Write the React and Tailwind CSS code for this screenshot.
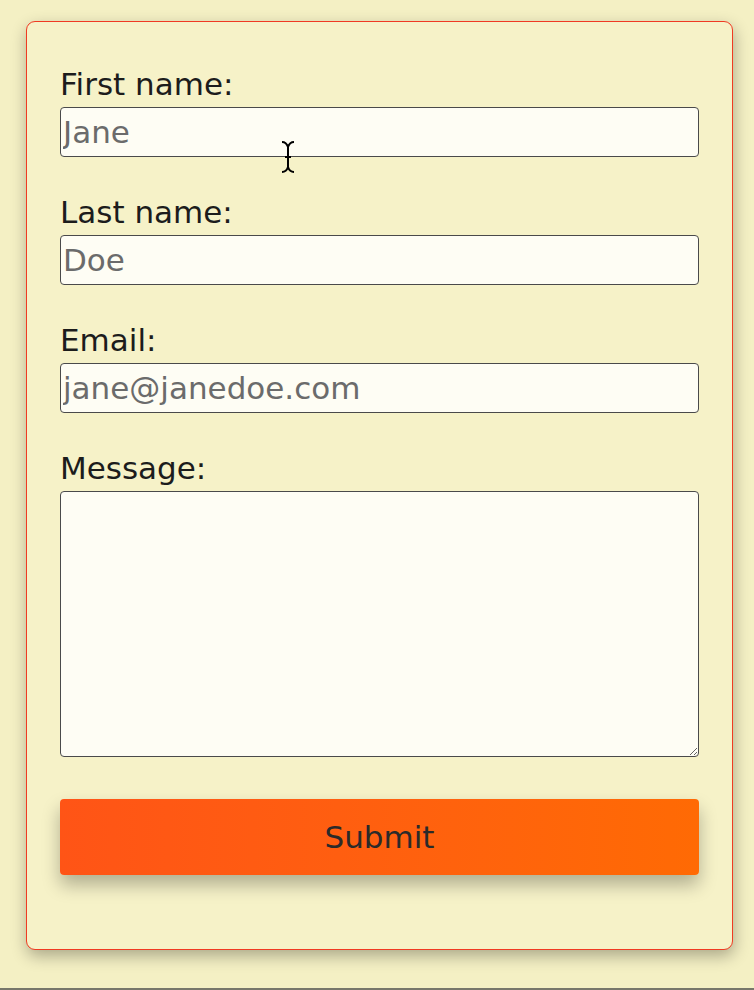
import React from "react";

function Field({ label, placeholder, type = "text" }) {
  return (
    <div className="mb-[35px]">
      <label className="block text-[31px] leading-[40px] text-[#1c1c1c]">{label}</label>
      <input
        type={type}
        placeholder={placeholder}
        className="mt-[3px] block h-[50px] w-full rounded-[4px] border border-[#4a4a4a] bg-[#fefdf4] px-[2px] text-[31px] text-[#6b6b6b] outline-none placeholder:text-[#6b6b6b]"
      />
    </div>
  );
}

function Cursor() {
  return (
    <svg className="absolute left-[279px] top-[140px]" width="18" height="34" viewBox="0 0 18 34">
      <path
        d="M3 2 C6 2 8 4 9 7 C10 4 12 2 15 2 M9 7 V27 M6 17 H12 M3 32 C6 32 8 30 9 27 C10 30 12 32 15 32"
        fill="none"
        stroke="#000"
        strokeWidth="2"
      />
    </svg>
  );
}

export default function App() {
  return (
    <div
      className="relative h-[990px] overflow-hidden border-b-2 border-[#77776a] bg-[#f4f0c4] pt-[21px] pl-[26px]"
      style={{ fontFamily: '"DejaVu Sans", "Open Sans", sans-serif' }}
    >
      <form className="w-[707px] rounded-[9px] border border-[#f03a22] bg-[#f6f2c8] px-[33px] pt-[42px] pb-[74px] shadow-[1px_6px_16px_rgba(0,0,0,0.3)]">
        <Field label="First name:" placeholder="Jane" />
        <Field label="Last name:" placeholder="Doe" />
        <Field label="Email:" placeholder="jane@janedoe.com" type="email" />
        <div>
          <label className="block text-[31px] leading-[40px] text-[#1c1c1c]">Message:</label>
          <textarea className="mt-[3px] block h-[266px] w-full rounded-[4px] border border-[#4a4a4a] bg-[#fefdf4] px-[2px] text-[31px] outline-none" />
        </div>
        <button
          type="button"
          className="mt-[42px] block h-[76px] w-full rounded-[4px] bg-gradient-to-r from-[#ff5416] to-[#ff6a04] text-[31px] text-[#2a2a2a] shadow-[0_10px_18px_rgba(0,0,0,0.28)]"
        >
          Submit
        </button>
      </form>
      <Cursor />
    </div>
  );
}
